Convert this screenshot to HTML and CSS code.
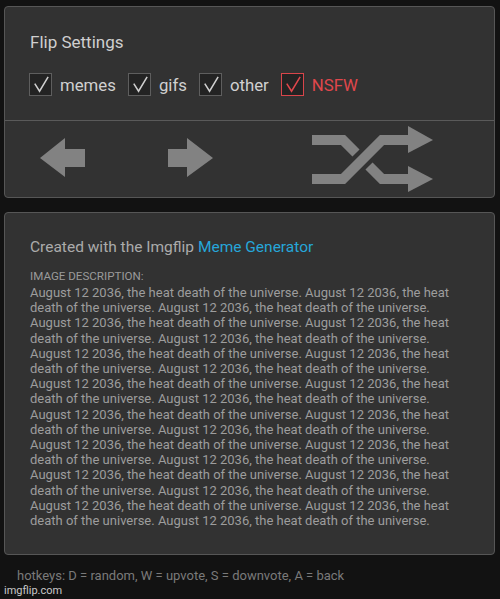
FILE: index.html
```html
<!DOCTYPE html>
<html lang="en">
<head>
  <meta charset="UTF-8">
  <meta name="viewport" content="width=device-width, initial-scale=1.0">
  <title>Flip</title>
  <link rel="stylesheet" href="styles.css">
</head>
<body>

<div class="card flip-card">
  <div class="flip-settings">
    <h2 class="flip-title">Flip Settings</h2>
    <div class="flip-options">
      <label class="opt"><span class="box"><svg viewBox="0 0 22 22"><path d="M5 10 L10 18 L19 3"/></svg></span>memes</label>
      <label class="opt"><span class="box"><svg viewBox="0 0 22 22"><path d="M5 10 L10 18 L19 3"/></svg></span>gifs</label>
      <label class="opt"><span class="box"><svg viewBox="0 0 22 22"><path d="M5 10 L10 18 L19 3"/></svg></span>other</label>
      <label class="opt nsfw"><span class="box"><svg viewBox="0 0 22 22"><path d="M5 10 L10 18 L19 3"/></svg></span>NSFW</label>
    </div>
  </div>
  <div class="flip-nav">
    <svg class="nav-arrow prev" viewBox="0 0 45 39"><polygon points="0,20 25,0 25,11 45,11 45,29 25,29 25,39"/></svg>
    <svg class="nav-arrow next" viewBox="0 0 45 39"><polygon points="45,20 19,0 19,11 0,11 0,29 19,29 19,39"/></svg>
    <svg class="nav-shuffle" viewBox="0 0 121 66">
      <path class="line" d="M0 53 H31 L70 14 H97"/>
      <path class="line" d="M0 14 H31 L44 27 M57 40 L70 53 H97"/>
      <polygon points="96,0 121,14 96,27"/>
      <polygon points="96,40 121,53 96,66"/>
    </svg>
  </div>
</div>

<div class="card desc-card">
  <p class="created">Created with the Imgflip <a href="#">Meme Generator</a></p>
  <div class="desc-label">IMAGE DESCRIPTION:</div>
  <p class="desc-text">August 12 2036, the heat death of the universe. August 12 2036, the heat death of the universe. August 12 2036, the heat death of the universe. August 12 2036, the heat death of the universe. August 12 2036, the heat death of the universe. August 12 2036, the heat death of the universe. August 12 2036, the heat death of the universe. August 12 2036, the heat death of the universe. August 12 2036, the heat death of the universe. August 12 2036, the heat death of the universe. August 12 2036, the heat death of the universe. August 12 2036, the heat death of the universe. August 12 2036, the heat death of the universe. August 12 2036, the heat death of the universe. August 12 2036, the heat death of the universe. August 12 2036, the heat death of the universe. August 12 2036, the heat death of the universe. August 12 2036, the heat death of the universe. August 12 2036, the heat death of the universe. August 12 2036, the heat death of the universe. August 12 2036, the heat death of the universe. August 12 2036, the heat death of the universe. August 12 2036, the heat death of the universe. August 12 2036, the heat death of the universe.</p>
</div>

<div class="hotkeys">hotkeys: D = random, W = upvote, S = downvote, A = back</div>
<div class="watermark">imgflip.com</div>

</body>
</html>
```
FILE: styles.css
```css
* {
  box-sizing: border-box;
}
body {
  font-family: Roboto, "Liberation Sans", sans-serif;
  background-color: #121212;
  margin: 0;
  padding: 6px 0 0;
  height: 599px;
  overflow: hidden;
  position: relative;
}
.card {
  background: #323232;
  border: 1px solid #565656;
  border-radius: 4px;
  margin: 0 4px 0 4px;
  width: 491px;
}
.flip-settings {
  padding: 23px 25px 0;
  height: 114px;
  border-bottom: 1px solid #5a5a5a;
}
.flip-title {
  margin: 0;
  font-size: 17px;
  font-weight: normal;
  color: #cfcfcf;
  line-height: 24px;
}
.flip-options {
  display: flex;
  align-items: center;
  gap: 12px;
  margin-top: 19px;
  margin-left: -1px;
}
.opt {
  display: flex;
  align-items: center;
  font-size: 16.8px;
  color: #d0d0d0;
}
.box {
  width: 23px;
  height: 23px;
  border: 1px solid #5e5e5e;
  background: #232323;
  margin-right: 8px;
}
.box svg {
  display: block;
  width: 21px;
  height: 21px;
}
.box path {
  fill: none;
  stroke: #cfcfcf;
  stroke-width: 1.6;
}
.nsfw {
  color: #e0474c;
}
.nsfw .box {
  border-color: #d8454a;
}
.nsfw .box path {
  stroke: #e0474c;
}
.flip-nav {
  display: flex;
  align-items: center;
  height: 76px;
  padding-left: 35px;
}
.nav-arrow {
  width: 45px;
  height: 39px;
  fill: #828282;
  margin-top: -3px;
}
.nav-arrow.next {
  margin-left: 83px;
}
.nav-shuffle {
  width: 121px;
  height: 66px;
  margin-left: 99px;
  fill: #828282;
}
.nav-shuffle .line {
  fill: none;
  stroke: #828282;
  stroke-width: 10;
}
.desc-card {
  margin-top: 14px;
  padding: 22px 25px 30px;
  height: 343px;
}
.created {
  margin: 0;
  font-size: 15.5px;
  color: #ababab;
  line-height: 24px;
}
.created a {
  color: #26a6d9;
  text-decoration: none;
}
.desc-label {
  margin-top: 9px;
  font-size: 11.6px;
  color: #9a9a9a;
  line-height: 16px;
}
.desc-text {
  margin: 1px 0 0;
  font-size: 13px;
  line-height: 15.2px;
  color: #9d9d9d;
}
.hotkeys {
  margin: 13px 0 0 17px;
  font-size: 13px;
  color: #7a7a7a;
}
.watermark {
  position: absolute;
  left: 4px;
  bottom: 2px;
  font-size: 11px;
  color: #c8c8c8;
}
```
